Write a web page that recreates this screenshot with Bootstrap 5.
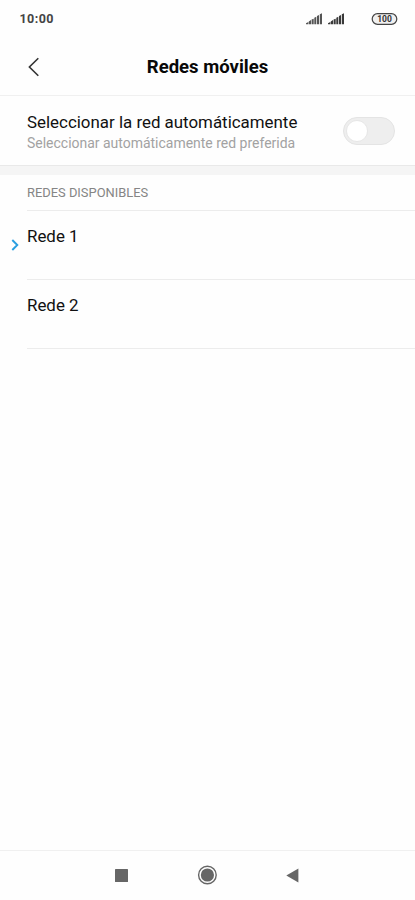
<!DOCTYPE html>
<html lang="es">
<head>
<meta charset="utf-8">
<meta name="viewport" content="width=device-width, initial-scale=1">
<title>Redes móviles</title>
<link href="https://cdn.jsdelivr.net/npm/bootstrap@5.3.0/dist/css/bootstrap.min.css" rel="stylesheet">
<style>
body{font-family:Roboto,"Liberation Sans",sans-serif;color:#111;background:#fefefe;line-height:20px}
svg{display:block;flex:none}
.phone{height:900px;width:415px;overflow:hidden}
.status{height:38px;padding:0 17px 0 19.5px}
.clock{font-size:12.5px;font-weight:700;color:#444;letter-spacing:.43px}
.signals{gap:6px;margin-right:27px}
.title-bar{height:58px;border-bottom:1px solid #f0f0f0;display:grid;grid-template-columns:54px 1fr 54px}
.title-bar h1{font-size:18.5px;font-weight:700;line-height:22px;color:#080808}
.auto{height:69px;padding:0 20px 0 27px}
.label-main{font-size:16.9px}
.label-sub{font-size:13.98px;color:#a2a2a2;line-height:18px;padding-top:2px;margin-bottom:-2px}
.auto .form-check-input{width:52px;height:28px;border:1px solid #e4e4e4;background-color:#eee;background-size:24px 22px;background-position:2px center;
background-image:url("data:image/svg+xml,%3csvg xmlns='http://www.w3.org/2000/svg' viewBox='0 0 24 22'%3e%3ccircle cx='11' cy='11' r='10.5' fill='%23fff' stroke='%23e0e0e0' stroke-width='.7'/%3e%3c/svg%3e")}
.band{height:10px;background:#f5f5f5;border-top:1px solid #e9e9e9}
.section-head{height:35px;font-size:12.9px;color:#858585}
.networks{padding-left:27px}
.networks .list-group-item{height:69px;padding:15px 0 0;border:0;border-top:1px solid #ececec;border-radius:0;background:none;color:#111}
.networks .list-group-item:last-child{height:70px;border-bottom:1px solid #ececec}
.chosen{margin-left:-16px;width:16px;padding-top:13px}
.keys{height:50px;border-top:1px solid #f0f0f0;padding-right:2px;padding-bottom:1px}
.keys button{width:85.5px;height:48px}
</style>
<script src="https://cdn.jsdelivr.net/npm/bootstrap@5.3.0/dist/js/bootstrap.bundle.min.js"></script>
</head>
<body>
<div class="phone d-flex flex-column">
  <div class="status d-flex align-items-center">
    <span class="clock">10:00</span>
    <div class="signals d-flex ms-auto">
      <svg width="16" height="12" viewBox="0 0 16 12" fill="#555"><path d="M0 11.3V10.2L2.3 9v2.3zM2.8 11.3V8.5L5 7v4.3zM5.6 11.3V6.6l2.1-.9v5.6zM8.3 11.3V4.7l2-.9v7.5zM11 11.3V2.9l2-1v9.4zM13.8 11.3V1.3L16 .3v11z"/></svg>
      <svg width="16" height="12" viewBox="0 0 16 12" fill="#3a3a3a"><path d="M0 11.3V10.2L2.3 9v2.3zM2.8 11.3V8.5L5 7v4.3zM5.6 11.3V6.6l2.1-.9v5.6zM8.3 11.3V4.7l2-.9v7.5zM11 11.3V2.9l2-1v9.4zM13.8 11.3V1.3L16 .3v11z"/></svg>
    </div>
    <svg width="27" height="12" viewBox="0 0 27 12"><rect x="1.2" y=".7" width="24.6" height="10.6" rx="5.3" fill="#f0f0f0" stroke="#444" stroke-width="1.2"/><text x="13.5" y="9.1" text-anchor="middle" font-family="Roboto,sans-serif" font-weight="700" font-size="8.5" fill="#333">100</text></svg>
  </div>
  <header class="title-bar align-items-center">
    <svg width="54" height="24" viewBox="0 0 54 24" fill="none" stroke="#333" stroke-width="1.6"><path d="M38.3 3.2 29.4 12l8.9 8.8"/></svg>
    <h1 class="text-center mb-0">Redes móviles</h1>
  </header>
  <section class="auto d-flex justify-content-between align-items-center">
    <label for="auto"><span class="label-main d-block">Seleccionar la red automáticamente</span><span class="label-sub d-block">Seleccionar automáticamente red preferida</span></label>
    <div class="form-switch p-0 d-flex"><input class="form-check-input m-0" type="checkbox" role="switch" id="auto"></div>
  </section>
  <div class="band"></div>
  <div class="networks">
    <div class="section-head d-flex align-items-center">REDES DISPONIBLES</div>
    <div class="list-group list-group-flush">
      <div class="list-group-item d-flex">
        <span class="chosen"><svg width="10" height="12" viewBox="0 0 10 12" fill="none" stroke="#2b9fe0" stroke-width="1.9"><path d="m1.3 1 5 5-5 5"/></svg></span>
        <span class="label-main">Rede 1</span>
      </div>
      <div class="list-group-item"><span class="label-main">Rede 2</span></div>
    </div>
  </div>
  <nav class="keys mt-auto d-flex justify-content-center align-items-center">
    <button class="btn p-0 border-0 d-flex justify-content-center align-items-center" aria-label="Recientes"><svg width="13" height="13"><rect width="13" height="13" rx=".6" fill="#666"/></svg></button>
    <button class="btn p-0 border-0 d-flex justify-content-center align-items-center" aria-label="Inicio"><svg width="20" height="20" viewBox="0 0 20 20"><circle cx="10.4" cy="10" r="6.6" fill="#666"/><circle cx="10.4" cy="10" r="8.8" fill="none" stroke="#666" stroke-width="1.4"/></svg></button>
    <button class="btn p-0 border-0 d-flex justify-content-center align-items-center" aria-label="Atrás"><svg width="13" height="15" viewBox="0 0 13 15"><path d="M.3 7.5 12.4.4v14.2z" fill="#666"/></svg></button>
  </nav>
</div>
</body>
</html>
